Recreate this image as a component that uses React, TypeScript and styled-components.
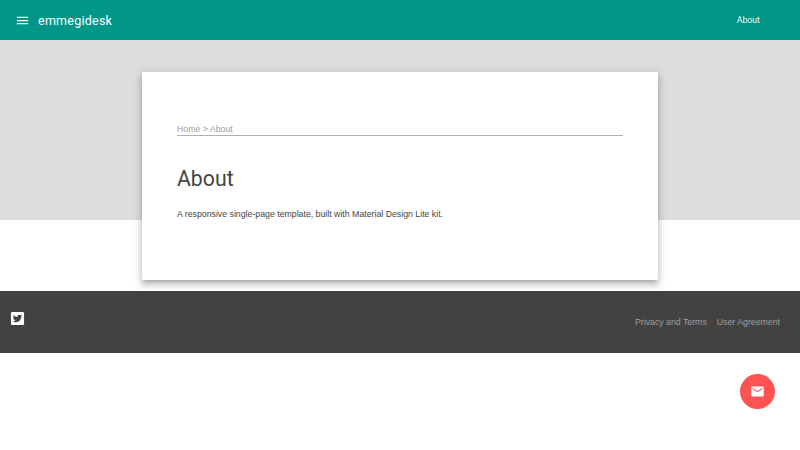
import React from "react";
import styled, { createGlobalStyle } from "styled-components";
import { FaTwitterSquare } from "react-icons/fa";
import { MdEmail, MdMenu } from "react-icons/md";

const GlobalStyle = createGlobalStyle`
  html, body {
    margin: 0;
    padding: 0;
    background: #fff;
    font-family: "Liberation Sans", Arial, sans-serif;
  }
  * {
    box-sizing: border-box;
  }
`;

const App: React.FC = () => {
  return (
    <Page>
      <GlobalStyle />
      <Header>
        <MenuButton aria-label="menu">
          <MdMenu size={15} />
        </MenuButton>
        <Title>emmegidesk</Title>
        <NavLink>About</NavLink>
      </Header>
      <Hero />
      <Card>
        <Breadcrumb>Home &gt; About</Breadcrumb>
        <Heading>About</Heading>
        <Text>A responsive single-page template, built with Material Design Lite kit.</Text>
      </Card>
      <Footer>
        <TwitterLink>
          <FaTwitterSquare size={15} />
        </TwitterLink>
        <FooterLinks>
          <FooterLink>Privacy and Terms</FooterLink>
          <FooterLink>User Agreement</FooterLink>
        </FooterLinks>
      </Footer>
      <Fab aria-label="contact">
        <MdEmail size={15} />
      </Fab>
    </Page>
  );
};
export default App;

const Page = styled.div`
  position: relative;
  width: 800px;
  height: 450px;
  overflow: hidden;
`;
const Header = styled.header`
  display: flex;
  align-items: center;
  height: 40px;
  padding: 0 40px 0 15px;
  background-color: #009688;
  color: #fff;
`;
const MenuButton = styled.button`
  display: flex;
  width: 15px;
  height: 15px;
  padding: 0;
  border: none;
  color: #fff;
  background: none;
`;
const Title = styled.span`
  margin-left: 8px;
  font-family: Roboto, sans-serif;
  font-size: 12.5px;
  letter-spacing: 0.25px;
`;
const NavLink = styled.a`
  margin-left: auto;
  font-family: Roboto, sans-serif;
  font-size: 8.75px;
  color: #f0f8f7;
`;
const Hero = styled.div`
  height: 180px;
  background-color: #dddddd;
`;
const Card = styled.main`
  width: 516px;
  height: 208px;
  margin: -148px auto 0;
  padding: 51px 35px 0;
  background-color: #fff;
  box-shadow: 0 5px 6px 1px rgba(0, 0, 0, 0.14), 0 2px 9px 1px rgba(0, 0, 0, 0.12),
    0 3px 3px -2px rgba(0, 0, 0, 0.2);
`;
const Breadcrumb = styled.div`
  height: 13px;
  border-bottom: 1px solid #b0b0b0;
  color: #a0a0a0;
  font-size: 8.75px;
  line-height: 12px;
`;
const Heading = styled.h1`
  margin: 27px 0 0;
  color: #444;
  font-family: Roboto, sans-serif;
  font-size: 21.25px;
  font-weight: 400;
  line-height: 32px;
`;
const Text = styled.p`
  margin: 13px 0 0;
  color: #444;
  font-size: 8.75px;
  line-height: 12px;
`;
const Footer = styled.footer`
  display: flex;
  justify-content: space-between;
  height: 62px;
  margin-top: 11px;
  padding: 20px 20px 0 10px;
  background-color: #424242;
`;
const TwitterLink = styled.a`
  display: flex;
  height: 15px;
  color: #fff;
`;
const FooterLinks = styled.div`
  display: flex;
  gap: 10px;
  padding-top: 5px;
`;
const FooterLink = styled.a`
  color: #9e9e9e;
  font-size: 8.75px;
  line-height: 12px;
`;
const Fab = styled.button`
  position: absolute;
  left: 740px;
  top: 374px;
  display: flex;
  align-items: center;
  justify-content: center;
  width: 35px;
  height: 35px;
  padding: 0;
  border: none;
  border-radius: 50%;
  color: #fff;
  background-color: #ff5252;
`;
